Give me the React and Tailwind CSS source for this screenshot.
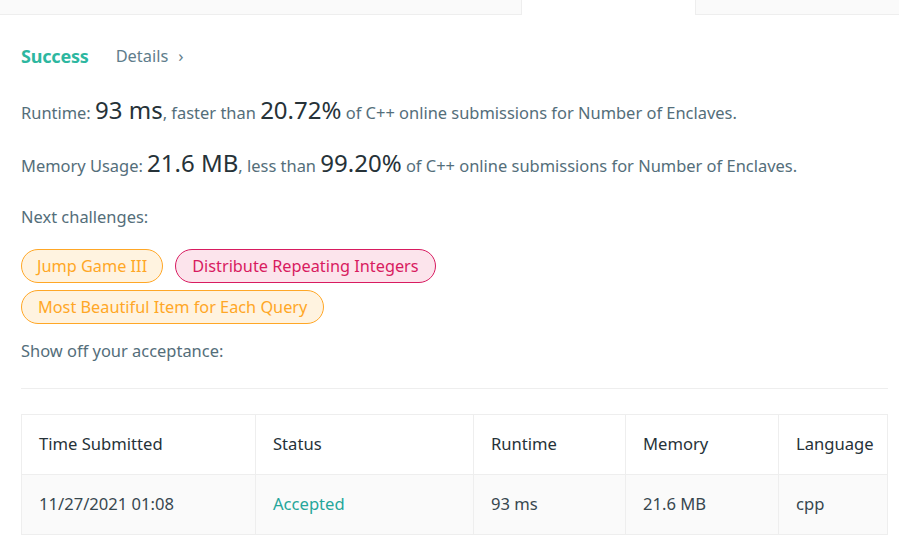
export default function App() {
  return (
    <div className="w-[899px] h-[538px] overflow-hidden bg-white font-['Noto_Sans',sans-serif] text-[#546e7a]">
      <div className="flex h-[15px]">
        <div className="w-[522px] bg-[#fafafa] border-b border-r border-[#eeeeee]"></div>
        <div className="w-[173px] bg-white"></div>
        <div className="flex-1 bg-[#fafafa] border-b border-l border-[#eeeeee]"></div>
      </div>
      <div className="pl-[21px] pr-[11px]">
        <div className="flex items-center h-[30px] mt-[26px]">
          <span className="text-[18px] font-bold text-[#2db7a0] tracking-[-0.2px]">Success</span>
          <span className="ml-[27px] text-[16.4px] text-[#607d8b]">Details</span>
          <span className="ml-[10px] text-[17px] text-[#607d8b]">›</span>
        </div>
        <div className="mt-[21px] h-[30px] flex items-baseline text-[16.45px] whitespace-nowrap">
          <span>Runtime:&nbsp;</span>
          <span className="text-[24px] text-[#263238]">93 ms</span>
          <span>, faster than&nbsp;</span>
          <span className="text-[24px] text-[#263238]">20.72%</span>
          <span>&nbsp;of C++ online submissions for Number of Enclaves.</span>
        </div>
        <div className="mt-[23px] h-[30px] flex items-baseline text-[16.45px] whitespace-nowrap">
          <span>Memory Usage:&nbsp;</span>
          <span className="text-[24px] text-[#263238]">21.6 MB</span>
          <span>, less than&nbsp;</span>
          <span className="text-[24px] text-[#263238]">99.20%</span>
          <span>&nbsp;of C++ online submissions for Number of Enclaves.</span>
        </div>
        <div className="mt-[30px] text-[16.45px] leading-[24px]">Next challenges:</div>
        <div className="mt-[20px] flex flex-col gap-[7px]">
          <div className="flex gap-[12px]">
            <span className="h-[34px] flex items-center px-[15px] rounded-full border border-[#ffa726] bg-[#fff3e0] text-[#ffa726] text-[16.3px]">Jump Game III</span>
            <span className="h-[34px] flex items-center px-[16px] rounded-full border border-[#d81b60] bg-[#fce4ec] text-[#d81b60] text-[16.3px]">Distribute Repeating Integers</span>
          </div>
          <div className="flex">
            <span className="h-[34px] flex items-center px-[16px] rounded-full border border-[#ffa726] bg-[#fff3e0] text-[#ffa726] text-[16.3px]">Most Beautiful Item for Each Query</span>
          </div>
        </div>
        <div className="mt-[15px] text-[16.45px] leading-[24px]">Show off your acceptance:</div>
        <div className="mt-[25px] border-t border-[#eeeeee]"></div>
        <table className="mt-[25px] w-[867px] border-collapse text-[16.6px] text-[#263238]">
          <thead>
            <tr className="h-[60px] bg-white">
              <th className="w-[234px] border border-[#eeeeee] pl-[17px] text-left font-normal">Time Submitted</th>
              <th className="w-[218px] border border-[#eeeeee] pl-[17px] text-left font-normal">Status</th>
              <th className="w-[152px] border border-[#eeeeee] pl-[17px] text-left font-normal">Runtime</th>
              <th className="w-[153px] border border-[#eeeeee] pl-[17px] text-left font-normal">Memory</th>
              <th className="border border-[#eeeeee] pl-[17px] text-left font-normal">Language</th>
            </tr>
          </thead>
          <tbody>
            <tr className="h-[60px] bg-[#fafafa] text-[#37474f]">
              <td className="border border-[#eeeeee] pl-[17px]">11/27/2021 01:08</td>
              <td className="border border-[#eeeeee] pl-[17px] text-[#26a69a]">Accepted</td>
              <td className="border border-[#eeeeee] pl-[17px]">93 ms</td>
              <td className="border border-[#eeeeee] pl-[17px]">21.6 MB</td>
              <td className="border border-[#eeeeee] pl-[17px]">cpp</td>
            </tr>
          </tbody>
        </table>
      </div>
    </div>
  );
}
